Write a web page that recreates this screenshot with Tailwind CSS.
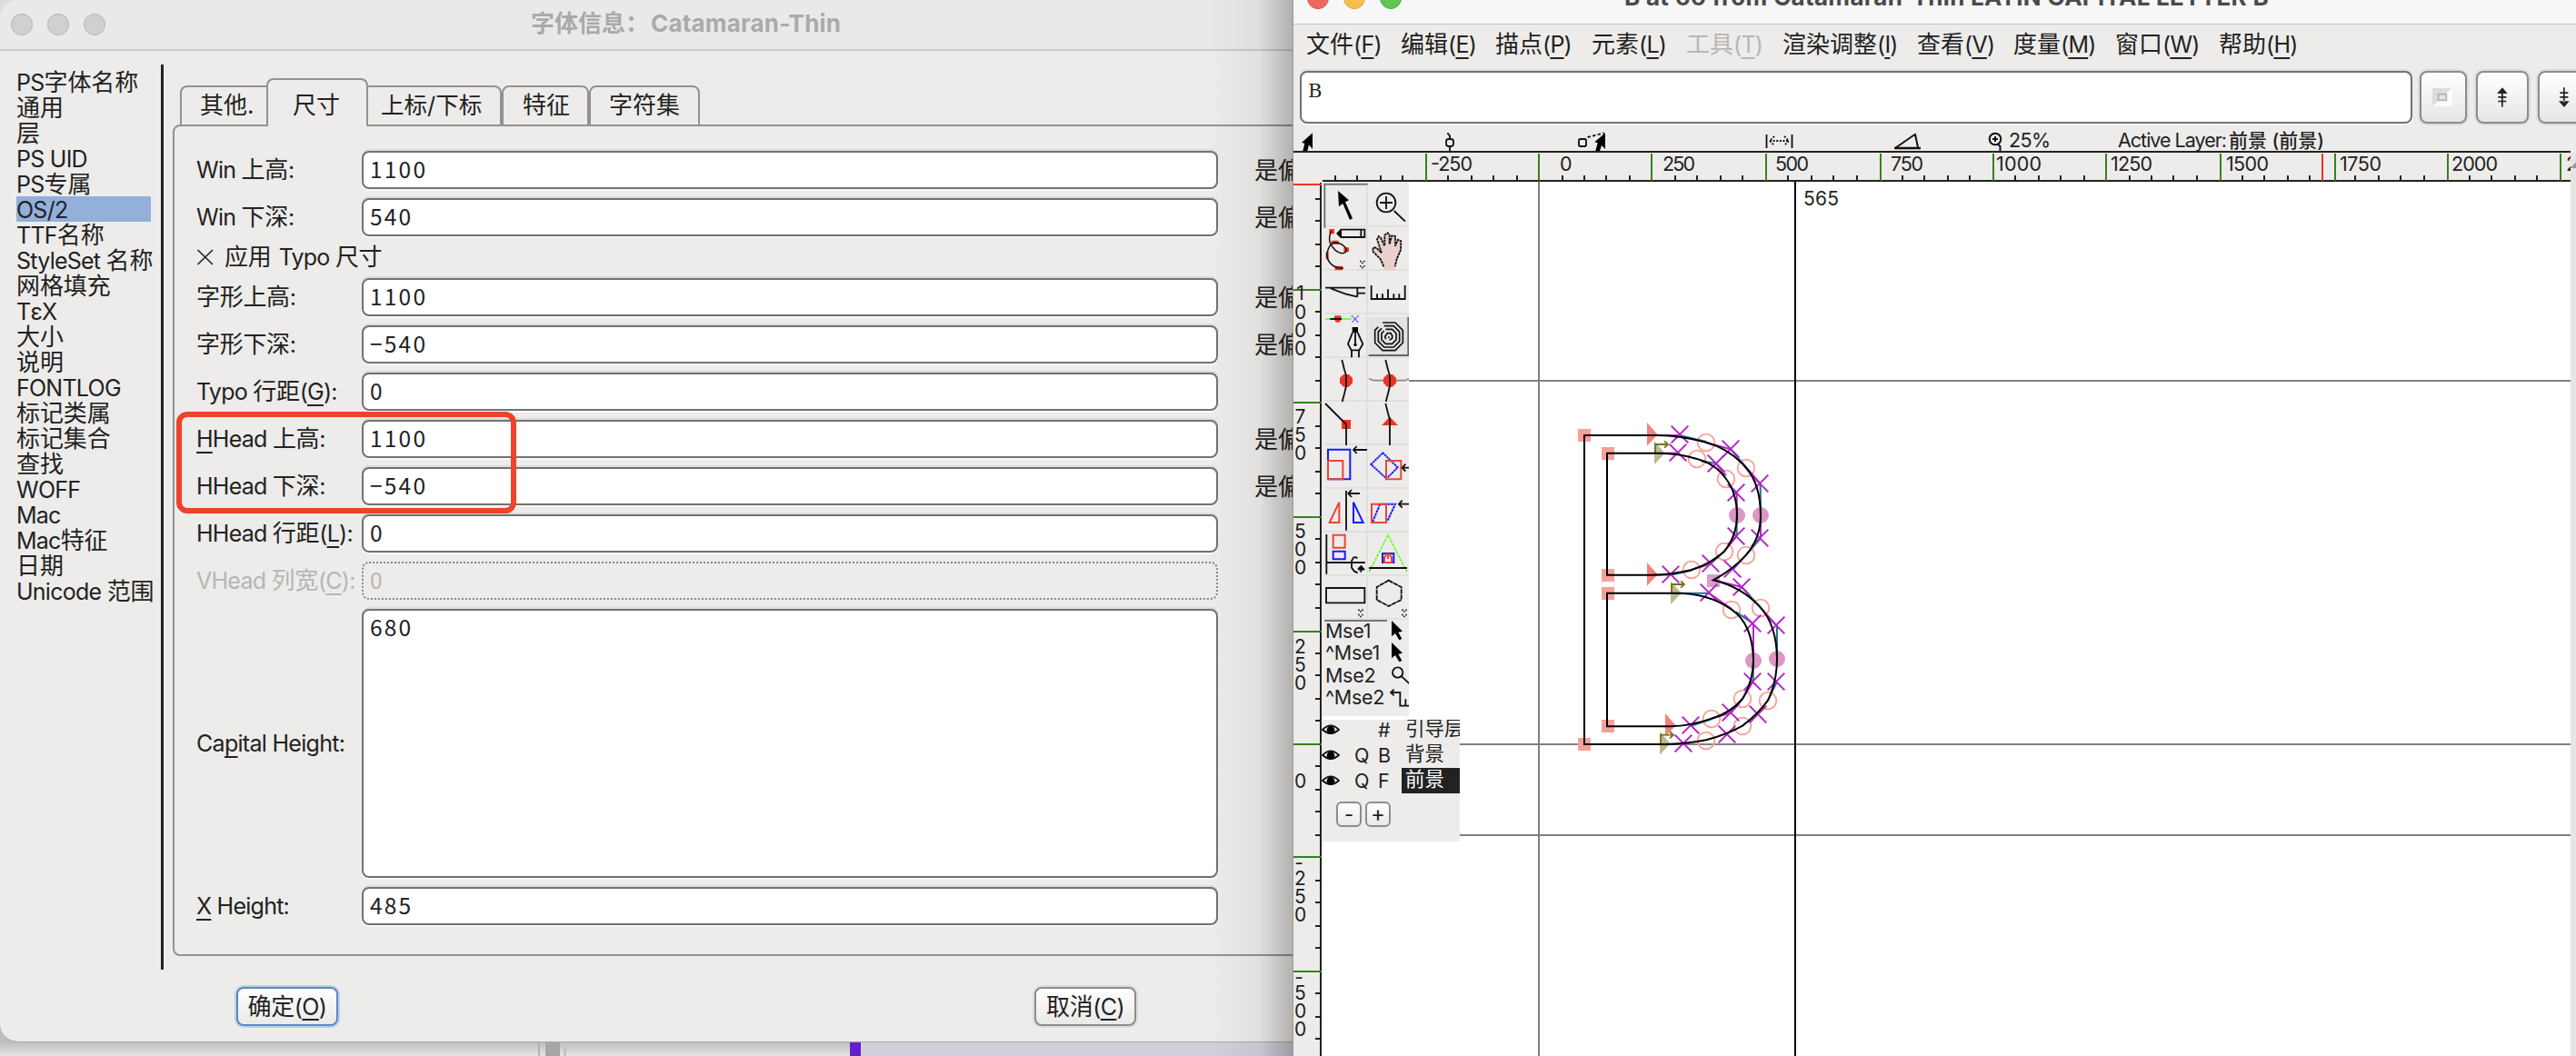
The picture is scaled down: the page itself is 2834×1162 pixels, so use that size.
<!DOCTYPE html>
<html lang="zh">
<head>
<meta charset="utf-8">
<title>FontForge</title>
<script src="https://cdn.jsdelivr.net/npm/@tailwindcss/browser@4"></script>
</head>
<body class="relative w-[2834px] h-[1162px] overflow-hidden bg-[#dcdcdb] text-[#222] font-['Inter','Noto_Sans_CJK_SC',sans-serif]">

<!-- strip of the desktop that shows below the dialog -->
<div class="absolute left-0 bottom-0 w-[1422px] h-[40px] flex bg-linear-to-b from-[#bdbdbc] from-60% to-[#e4e4e3]">
  <div class="w-[592px]"></div>
  <div class="w-[2px] bg-[#b4b4b4]"></div>
  <div class="w-[6px]"></div>
  <div class="w-[16px] bg-[#a6a6a6]"></div>
  <div class="w-[4px]"></div>
  <div class="w-[3px] bg-[#c4c4c4]"></div>
  <div class="w-[312px]"></div>
  <div class="w-[12px] bg-[#641fcf]"></div>
  <div class="grow bg-[#d2cfdc]"></div>
</div>

<!-- font information dialog -->
<section class="absolute left-0 top-0 w-[1440px] h-[1147px] flex flex-col bg-[#edecea] rounded-l-[20px] border-b border-[#aaa] overflow-hidden">
  <header class="h-[56px] shrink-0 flex items-center relative bg-[#e9e9e9] border-b-2 border-[#c9c9c9] pl-3 gap-4">
    <i class="size-6 rounded-full bg-[#d0d0d0] border border-[#b4b4b4]"></i>
    <i class="size-6 rounded-full bg-[#d0d0d0] border border-[#b4b4b4]"></i>
    <i class="size-6 rounded-full bg-[#d0d0d0] border border-[#b4b4b4]"></i>
    <h1 class="ml-[452px] mb-[3px] text-[26px] font-bold text-[#aaa] whitespace-pre flex"><span class="w-[132px] whitespace-nowrap">字体信息：</span><span class="font-[Inter] text-[26px] tracking-[0.2px]">Catamaran-Thin</span></h1>
  </header>
  <div class="flex h-[1011px] pt-[15px]">
    <nav id="side" class="w-[180px] shrink-0 h-[996px] border-r-3 border-[#222] pl-[18px] pt-[5px]"></nav>
    <div class="pl-[10px] pt-[15px]">
      <div class="flex items-end pl-[8px] h-[53px] relative z-10 -mb-[2px]">
        <div class="w-[95px] h-[45px] border-2 border-r-0 border-[#929290] rounded-tl-lg pl-[20px] leading-[39px] text-[26px] whitespace-nowrap">其他.</div>
        <div class="w-[112px] h-[53px] border-2 border-b-0 border-[#929290] rounded-t-lg pl-[27px] leading-[55px] text-[26px] bg-[#edecea] whitespace-nowrap">尺寸</div>
        <div class="w-[147px] h-[45px] border-2 border-l-0 border-[#929290] rounded-tr-lg pl-[14px] leading-[39px] text-[25.5px] whitespace-nowrap">上标/下标</div>
        <div class="w-[96px] h-[45px] border-2 border-[#929290] rounded-t-lg pl-[21px] leading-[39px] text-[26px] whitespace-nowrap">特征</div>
        <div class="w-[122px] h-[45px] border-2 border-[#929290] rounded-t-lg pl-[20px] leading-[39px] text-[26px] whitespace-nowrap">字符集</div>
      </div>
      <div id="form" class="w-[1270px] h-[915px] border-2 border-[#929290] rounded-lg pl-[24px] pt-[27px] flex flex-col gap-[10px]"></div>
    </div>
  </div>
  <footer class="flex pt-[19px] pl-[260px]">
    <button class="w-[112px] h-[43px] rounded-lg border-[2.5px] border-[#5b87c4] shadow-[0_0_0_2px_#bccfe8] bg-linear-to-b from-white to-[#e9e9e8] text-[26px] leading-[38px] whitespace-nowrap"><span class="tracking-[-0.4px]">确定</span><span class="text-[25px] tracking-[-0.6px]">(<u class="decoration-2 underline-offset-[4px]">O</u>)</span></button>
    <button class="ml-[766px] w-[112px] h-[43px] rounded-lg border-[2.5px] border-[#8c8c8a] shadow-[0_0_0_2px_#dddcda] bg-linear-to-b from-white to-[#e9e9e8] text-[26px] leading-[38px] whitespace-nowrap"><span class="tracking-[-0.4px]">取消</span><span class="text-[25px] tracking-[-0.6px]">(<u class="decoration-2 underline-offset-[4px]">C</u>)</span></button>
  </footer>
</section>

<!-- annotation frame -->
<div class="absolute left-[194px] top-[453px] w-[374px] h-[112px] border-[6px] border-[#ee4229] rounded-xl"></div>
<!-- shadow that the front window casts -->
<div class="absolute left-[1330px] top-0 w-[92px] h-[1162px] bg-linear-to-r from-transparent via-black/5 via-60% to-black/25"></div>

<!-- glyph editing window -->
<section class="absolute left-[1422px] top-0 w-[1412px] h-[1162px] bg-[#edecea] border-l border-[#9a9a98] flex flex-col overflow-hidden">
  <header class="h-[27px] shrink-0 relative bg-[#f7f7f7] border-b border-[#c6c6c6]">
    <div class="flex gap-4 pl-[15px] -mt-[14px]">
      <i class="size-6 rounded-full bg-[#ee6a5f] border border-[#d5554b]"></i>
      <i class="size-6 rounded-full bg-[#f5bf4f] border border-[#d9a33c]"></i>
      <i class="size-6 rounded-full bg-[#62c554] border border-[#4fa843]"></i>
      <h2 class="ml-[229px] mt-[-1px] leading-[24px] text-[26px] font-bold text-[#4a4a4a] whitespace-nowrap tracking-[0.3px]">B at 66 from Catamaran-Thin LATIN CAPITAL LETTER B</h2>
    </div>
  </header>
  <div id="menu" class="flex h-[51px] shrink-0 pl-[14px] leading-[44px] text-[26px] whitespace-nowrap"></div>
  <div class="flex h-[58px] shrink-0 pl-[7px]">
    <div class="w-[1224px] shrink-0 bg-white border-2 border-[#727270] rounded-lg shadow-[0_2px_0_#fafafa,0_-2px_0_#dddcda] pl-[7px] pt-[6px] font-['DejaVu_Serif'] text-[21px] leading-[28px]">B</div>
    <button class="ml-[8px] w-[52px] shrink-0 border-2 border-[#8c8c8a] rounded-lg shadow-[0_0_0_2px_#dddcda] bg-linear-to-b from-white to-[#e6e6e5]">
      <svg class="ml-[12px]" width="22" height="20" viewBox="126 78 66 60"><path d="M126 78H188L126 138Z" fill="#dcdcda"/><path d="M192 78V138H126Z" fill="#fbfbfa"/><rect x="146" y="98" width="26" height="20" fill="#e4e4e2" stroke="#b0b0ae" stroke-width="5"/></svg>
    </button>
    <button class="ml-[10px] w-[58px] shrink-0 border-2 border-[#8c8c8a] rounded-lg shadow-[0_0_0_2px_#dddcda] bg-linear-to-b from-white to-[#e6e6e5]">
      <svg class="ml-[21px] -mt-px" width="12" height="22" viewBox="338 73 36 66"><path d="M338 94L356 74L373 94ZM353 90H358V138H353ZM342 103H369V108H342ZM342 117H369V122H342Z" fill="#222"/></svg>
    </button>
    <button class="ml-[10px] w-[58px] shrink-0 border-2 border-[#8c8c8a] rounded-lg shadow-[0_0_0_2px_#dddcda] bg-linear-to-b from-white to-[#e6e6e5]">
      <svg class="ml-[21px] -mt-px" width="12" height="22" viewBox="542 73 36 66"><path d="M542 119L560 139L577 119ZM557 74H562V122H557ZM546 89H573V94H546ZM546 103H573V108H546Z" fill="#222"/></svg>
    </button>
  </div>
  <!-- status line -->
  <div class="flex h-[30px] shrink-0 items-stretch whitespace-nowrap text-[21.5px] leading-[37px] tracking-[-0.6px]">
    <svg class="ml-[8px] shrink-0" width="14" height="30" viewBox="33 228 42 90"><path d="M72 259L36 291L46 293L40 318H55L60 298L72 312Z" fill="#000"/></svg>
    <svg class="ml-[144px] shrink-0" width="12" height="30" viewBox="507 228 36 90"><g fill="none" stroke="#111" stroke-width="5.500"><path d="M517 259L525 268V278M525 304V318"/><rect x="513" y="279" width="24" height="24" rx="8"/></g></svg>
    <svg class="ml-[134px] shrink-0" width="32" height="30" viewBox="945 228 96 90"><rect x="951" y="279" width="24" height="24" rx="5" fill="none" stroke="#111" stroke-width="5.500"/><path d="M980 273L1034 259" stroke="#111" stroke-width="5.500" stroke-dasharray="10 7"/><path d="M1038 259L1003 289L1013 292L1006 318H1020L1026 300L1038 312Z" fill="#000"/></svg>
    <svg class="ml-[175px] shrink-0" width="31" height="30" viewBox="0 0 31 30"><path d="M1.500 12V27M29.500 12V27" stroke="#111" stroke-width="1.800"/><path d="M10 14L5 19L10 24M21 14L26 19L21 24M5 19H26" fill="none" stroke="#111" stroke-width="1.800" stroke-dasharray="2 1.600"/></svg>
    <svg class="ml-[111px] shrink-0" width="30" height="30" viewBox="0 0 30 30"><path d="M1 27L21 13L23 12L26 26" fill="none" stroke="#111" stroke-width="2"/><path d="M0 27H29" stroke="#111" stroke-width="2.500"/></svg>
    <svg class="ml-[73px] shrink-0" width="17" height="30" viewBox="0 0 17 30"><circle cx="8" cy="17" r="6.300" fill="none" stroke="#111" stroke-width="2"/><path d="M5 17H11M8 14V20M11 23L13.500 25V30" stroke="#111" stroke-width="2" fill="none"/></svg>
    <span class="ml-[6px] w-[120px] shrink-0">25%</span>
    <span class="shrink-0 tracking-[-1px]">Active Layer:</span><span class="ml-[3px] tracking-[0px] text-[21px] font-medium">前景 (前景)</span>
  </div>
  <!-- rulers, canvas, scrollbar -->
  <div class="flex grow min-h-0">
    <div class="w-[1405px] shrink-0 flex flex-col">
      <svg id="hruler" class="shrink-0" width="1405" height="34" viewBox="1423 166 1405 34"></svg>
      <div class="flex">
        <svg id="vruler" class="shrink-0" width="32" height="962" viewBox="1423 200 32 962"></svg>
        <div class="relative bg-white">
          <svg width="1373" height="962" viewBox="1455 200 1373 962">
            <g stroke="#808080" stroke-width="2"><path d="M1455 419H2828M1455 819H2828M1455 919H2828M1693 200V1162"/></g>
            <path d="M1975 200V1162" stroke="#000" stroke-width="2"/>
            <text x="1984" y="226" font-size="21" font-family="Inter" fill="#222" textLength="39">565</text>
            <g id="glyph" transform="translate(1680 440) scale(.333333)"></g>
          </svg>
          <!-- tool palette -->
          <div class="absolute left-0 top-0 w-[95px] h-[588px] bg-[#edecea] overflow-hidden pl-[2px] pt-[2px]">
            <div id="tools" class="grid grid-cols-[48px_48px] w-[96px]"></div>
            <div class="w-[69px] h-[2px] bg-[#777]"></div>
            <div class="pl-[1px] -mt-[2px] text-[21.5px] leading-[24.300px] tracking-[-0.3px]">
              <div class="flex justify-between w-[93px]">Mse1<svg width="20" height="24" viewBox="330 485 60 72"><path d="M330 488L366 523L352 526L364 548L355 552L342 530L330 540Z"/></svg></div>
              <div class="flex justify-between w-[93px]">^Mse1<svg width="20" height="24" viewBox="330 557 60 72"><path d="M330 560L366 595L352 598L364 620L355 624L342 602L330 612Z"/></svg></div>
              <div class="flex justify-between w-[93px]">Mse2<svg width="20" height="24" viewBox="330 629 60 72"><g fill="none" stroke="#111" stroke-width="5.500"><circle cx="350" cy="656" r="17"/><path d="M363 669L390 694"/></g></svg></div>
              <div class="flex justify-between w-[93px]">^Mse2<svg width="22" height="24" viewBox="324 701 66 72"><path d="M338 712L327 722L338 732M327 722H358V766H390M376 744V766" fill="none" stroke="#111" stroke-width="5.500"/></svg></div>
            </div>
          </div>
          <!-- layer palette -->
          <div id="layers" class="absolute -left-px top-[592px] w-[152px] h-[134px] bg-[#edecea] overflow-hidden"></div>
        </div>
      </div>
    </div>
    <div class="w-[6px] mt-[2px] bg-[#e5e5e2]"><svg width="6" height="26" viewBox="0 0 6 26"><path d="M6 12V16H2Z" fill="#999" stroke="#999" stroke-width="2"/></svg></div>
  </div>
</section>

<script>
const $ = id => document.getElementById(id);
// Latin runs are set a little smaller and tighter than the CJK text round them
const mix = s => s.replace(/[A-Za-z0-9ε\/_()%:. ]+/g, m =>
  `<span class="text-[25px] ${m.length > 13 ? 'tracking-[-0.700px]' : 'tracking-[-0.750px]'}">${m.replace(/_(.)/g, '<u class="decoration-2 underline-offset-[5px]">$1</u>')}</span>`);

$('side').innerHTML = ['PS字体名称','通用','层','PS UID','PS专属','OS/2','TTF名称','StyleSet 名称','网格填充','TεX','大小','说明','FONTLOG','标记类属','标记集合','查找','WOFF','Mac','Mac特征','日期','Unicode 范围']
  .map(t => `<div class="h-[28px] w-[148px] leading-[30px] text-[26px] tracking-[-0.1px] whitespace-nowrap ${t === 'OS/2' ? 'bg-[#93b0da]' : ''}">${mix(t)}</div>`).join('');

const off = '是偏';
const fields = [['Win 上高:','1100',off],['Win 下深:','540',off],null,['字形上高:','1100',off],['字形下深:','−540',off],['Typo 行距(_G):','0',''],
  ['_HHead 上高:','1100',off],['HHead 下深:','−540',off],['HHead 行距(_L):','0',''],['VHead 列宽(_C):','0','','dis'],['Ca_pital Height:','680','','big'],['_X Height:','485','']];
$('form').innerHTML = fields.map(f => {
  if (!f) return `<div class="h-[26px] flex items-center text-[26px] whitespace-pre leading-[26px]"><svg width="20" height="20" viewBox="0 0 20 20"><path d="M1.500 2L18 18M18 2L1.500 18" stroke="#222" stroke-width="1.600"/></svg><span class="ml-[11px] tracking-[-0.3px]">应用<span class="ml-[2px]">${mix(' Typo ')}</span>尺寸</span></div>`;
  const [l, v, r, k] = f;
  return `<div class="flex items-center shrink-0 ${k === 'big' ? 'h-[296px]' : 'h-[42px]'}">
    <div class="w-[182px] shrink-0 text-[26px] tracking-[-0.3px] whitespace-nowrap ${k === 'dis' ? 'text-[#b6b6b4]' : ''}">${mix(l)}</div>
    <div class="w-[942px] h-full shrink-0 rounded-lg border-2 pl-[7px] leading-[36px] text-[24.500px] tracking-[2.200px] font-['Noto_Sans_CJK_SC'] ${k === 'dis' ? 'border-dotted border-[#888] text-[#b6b6b4]' : 'bg-white border-[#727270] shadow-[0_2px_0_#f8f8f7,0_-2px_0_#dddcda]'}">${v}</div>
    <div class="ml-[40px] text-[26px] tracking-[-0.3px] whitespace-nowrap">${r}</div></div>`;
}).join('');

$('menu').innerHTML = [['文件(_F)','w-[104px]'],['编辑(_E)','w-[104px]'],['描点(_P)','w-[106px]'],['元素(_L)','w-[104px]'],['工具(_T)','w-[106px] text-[#b6b6b4]'],['渲染调整(_I)','w-[148px]'],['查看(_V)','w-[106px]'],['度量(_M)','w-[112px]'],['窗口(_W)','w-[114px]'],['帮助(_H)','w-[100px]']]
  .map(([t, c]) => `<div class="${c} shrink-0">${mix(t)}</div>`).join('');

// rulers
let h = '<path d="M1423 167H2834" stroke="#222" stroke-width="2"/><path d="M1455 199H2828" stroke="#222" stroke-width="2"/>';
for (let i = -4; i < 51; i++) { const x = 2 * Math.floor((1569.3 + 24.96 * i - 1) / 2) + 1; if (((i % 5) + 5) % 5) h += `<path d="M${x} 193V199" stroke="#222" stroke-width="2"/>`; }
[1569,1693,1817,1943,2069,2193,2317,2443,2569,2693,2817].forEach(x => h += `<path d="M${x} 169V199" stroke="#37801f" stroke-width="2"/>`);
h += '<path d="M2555 169V199" stroke="#ee3322" stroke-width="2"/>';
[[1574,'-250',46],[1716,'0',13],[1829,'250',36],[1953,'500',37],[2080,'750',36],[2196,'1000',50],[2322,'1250',46],[2449,'1500',47],[2574,'1750',46],[2697,'2000',51],[2823,'2250',50]].forEach(([x, t, w]) => h += `<text x="${x}" y="188" font-size="21.500" font-family="Inter" fill="#222" textLength="${w}">${t}</text>`);
$('hruler').innerHTML = h;
let v = '<path d="M1453 201V1162" stroke="#222" stroke-width="2"/><path d="M1423 203H1454" stroke="#ee3322" stroke-width="2"/>';
for (let i = -4; i < 34; i++) { const y = 2 * Math.floor((319.3 + 25 * i - 1) / 2) + 1; if (((i % 5) + 5) % 5) v += `<path d="M1447 ${y}H1453" stroke="#222" stroke-width="2"/>`; }
[319,443,569,695,819,943,1069].forEach(y => v += `<path d="M1423 ${y}H1454" stroke="#37801f" stroke-width="2"/>`);
[[322,'1'],[343,'0'],[363,'0'],[383,'0'],[458,'7'],[478,'5'],[498,'0'],[584,'5'],[604,'0'],[624,'0'],[711,'2'],[731,'5'],[751,'0'],[859,'0'],[949,'-'],[966,'2'],[986,'5'],[1006,'0'],[1075,'-'],[1092,'5'],[1112,'0'],[1132,'0']]
  .forEach(([y, t]) => v += `<text x="${t === '-' ? 1429 : 1430.5}" y="${y + 8}" text-anchor="middle" font-size="21" font-family="Inter" fill="#222">${t}</text>`);
$('vruler').innerHTML = v;

// outline of the glyph with its control points
let g = '';
const ln = (c, s) => s.forEach(([a, b, x, y]) => g += `<path d="M${a} ${b}L${x} ${y}" stroke="${c}" stroke-width="6"/>`);
[[189,117],[267,177],[267,579],[267,639],[267,1077],[189,1137]].forEach(([x, y]) => g += `<rect x="${x-21}" y="${y-21}" width="42" height="42" fill="#f7a099"/>`);
g += '<rect x="594" y="576" width="42" height="42" fill="#dc9cc8"/>';
[[396,75],[396,537],[456,1035]].forEach(([x, y]) => g += `<path d="M${x} ${y}L${x+35} ${y+40}L${x} ${y+77}Z" fill="#f4837b"/>`);
[[420,136],[474,598],[438,1095]].forEach(([x, y]) => g += `<path d="M${x} ${y}L${x+35} ${y+40}L${x} ${y+77}Z" fill="#bbb98c"/><path d="M${x+3} ${y+40}V${y+11}H${x+44}M${x+33} ${y}L${x+45} ${y+11}L${x+33} ${y+22}" fill="none" stroke="#73711c" stroke-width="5.500"/>`);
[[693,381],[771,381],[747,861],[825,855]].forEach(([x, y]) => g += `<circle cx="${x}" cy="${y}" r="27" fill="#dc97c4"/>`);
[[591,141],[723,225],[561,195],[657,261],[651,501],[723,513],[543,561],[675,693],[771,687],[711,987],[795,993],[609,1053],[711,1077],[591,1125]].forEach(([x, y]) => g += `<circle cx="${x}" cy="${y}" r="28" fill="none" stroke="#f7a096" stroke-width="5.500"/>`);
ln('#2b6f90', [[503,117,591,138],[672,163,723,222],[770,277,771,381],[771,457,723,512],[575,203,623,209],[692,381,692,450],[606,541,651,500],[475,578,543,563],[490,638,600,638],[709,618,771,686],[690,700,745,738],[825,745,825,855],[747,860,746,930],[825,930,795,992],[673,1033,711,987],[540,1077,609,1054],[670,285,692,306]]);
ln('#b324c6', [[430,117,503,117],[591,141,672,163],[723,222,770,277],[771,381,771,457],[437,176,498,176],[623,211,657,250],[692,306,693,381],[651,500,692,450],[543,561,606,541],[413,578,475,578],[615,595,709,618],[771,687,824,745],[600,638,675,690],[747,738,747,860],[711,987,746,930],[723,512,680,560],[609,1052,673,1033]]);
[[504,114],[672,162],[498,174],[624,210],[768,276],[690,306],[690,450],[768,456],[606,540],[474,576],[678,558],[708,618],[600,636],[744,738],[822,744],[744,930],[822,930],[672,1032],[762,1038],[540,1074],[660,1104],[516,1134]].forEach(([x, y]) => g += `<path d="M${x-28} ${y-28}L${x+28} ${y+28}M${x+28} ${y-28}L${x-28} ${y+28}" stroke="#b022c8" stroke-width="6"/>`);
g += `<path fill="none" stroke="#000" stroke-width="6" d="M189 117H430Q503 117 591 140Q672 163 723 225Q770 277 771 381Q771 457 723 512Q680 560 615 595Q709 618 771 686Q824 745 825 855Q825 930 795 992Q763 1037 711 1076Q660 1105 591 1123Q517 1137 457 1137H189ZM264 176H437Q498 176 561 195Q623 211 657 261Q692 306 693 381Q692 450 651 500Q606 541 543 561Q475 578 413 578H264ZM264 638H490Q600 638 675 692Q745 740 747 860Q746 930 711 987Q673 1033 609 1052Q540 1077 472 1078H264Z"/>`;
$('glyph').innerHTML = g;

// tool icons
const K = 'fill="none" stroke="#111" stroke-width="5.500"', R = 'fill="none" stroke="#ee4433" stroke-width="6"', B = 'fill="none" stroke="#1a1aff" stroke-width="6"';
const chev = (x, y) => `<path d="M${x-8} ${y}L${x} ${y+7}L${x+8} ${y}M${x-8} ${y+16}L${x} ${y+23}L${x+8} ${y+16}" fill="none" stroke="#222" stroke-width="5" stroke-dasharray="5 3"/>`;
const arrow = (x, y, e) => `<path d="M${x+12} ${y-12}L${x+1} ${y}L${x+12} ${y+12}M${x} ${y}H${e}" ${K}/>`;
const ring = (r, s) => { const k = r * .45; return `M${324-k} ${571-r}H${324+k}L${324+r} ${571-k}V${571+k}L${324+k} ${571+r}H${324-k}L${324-r} ${571+k}V${571-k}L${324-r+s} ${571-k-s}`; };
const icons = [
  [111,66,`<path d="M112 212V68H254" fill="none" stroke="#777" stroke-width="6"/><path d="M156 90L192 121L180 127L204 181L195 186L172 132L159 142Z"/>`],
  [255,66,`<circle cx="315" cy="129" r="31" ${K}/><path d="M315 108V150M294 129H336M341 156L378 191" ${K}/>`],
  [111,210,`<path d="M166 218H244V243H166L154 231ZM232 218V243" ${K}/><path d="M152 231L168 218V243Z"/><g fill="#ee3322"><path d="M127 216H144V232H127ZM134 254H158V267H134ZM175 277H192V292H175ZM116 292H125V316H116ZM146 338H171V352H146Z"/></g><path d="M134 222Q124 245 130 262Q145 292 168 296Q186 296 183 282Q172 262 146 260Q126 262 119 300Q122 335 158 345H174" fill="none" stroke="#111" stroke-width="4.500"/>${chev(237,321)}`],
  [255,210,`<path d="M307 340L296 315L271 290L272 277L282 278L298 293L285 250L290 240L297 245L308 267L310 234L320 229L326 236V262L336 236L345 240V265L354 251L364 256L363 290L350 320L344 340V354H312Z" fill="#ecd0d0"/><path d="M307 340L296 315L271 290L272 277L282 278L300 295L285 250L290 240L297 245L310 272V236L320 229L326 236V266L334 238L345 240V272L354 251L364 256L363 285L350 315L344 340" ${K} stroke-dasharray="9 2"/>`],
  [111,354,`<path d="M114 410H246M132 412L180 430L220 440M220 410V440M220 428H246" ${K}/>`],
  [255,354,`<path d="M266 402V447H377V402M285 447V430M303 447V430M321 447V415M340 447V430M358 447V430" ${K}/>`],
  [111,498,`<path d="M114 513H200" stroke="#7cfa4c" stroke-width="6"/><path d="M145 502H165L169 513L160 524H150L142 513Z" fill="#ee3322"/><path d="M130 513H168" ${K}/><path d="M201 502L224 525M224 502L201 525" stroke="#6666ff" stroke-width="5" stroke-dasharray="6 2"/><path d="M203 540H222V558H203Z"/><path d="M204 558L189 595L200 616H226L238 595L221 558M213 556V598M201 640V616M225 640V616" ${K}/><circle cx="213" cy="598" r="5"/>`],
  [255,498,`<path d="M257 506H388V636H257Z" fill="#e3e3e1"/><path d="M257 633H388V506" fill="none" stroke="#666" stroke-width="6"/><path d="${ring(46,11)}${ring(35,11)}${ring(24,8)}M314 580L311 571L319 560H330L335 568V576L326 583M324 571V576" fill="none" stroke="#111" stroke-width="5"/>`],
  [111,642,`<path d="M174 696H192L204 708V724L192 737H174L162 724V708Z" fill="#ee3322"/><path d="M169 648L177 680L183 700V735L177 760L170 786" ${K}/>`],
  [255,642,`<path d="M258 710L275 716H378L390 710" fill="none" stroke="#888" stroke-width="5"/><path d="M318 696H336L348 708V724L336 737H318L306 724V708Z" fill="#ee3322"/><path d="M313 648L321 680L327 700V735L321 760L314 786" ${K}/>`],
  [111,786,`<path d="M168 846H198V876H168Z" fill="#ee3322"/><path d="M114 792L183 861V930" ${K}/>`],
  [255,786,`<path d="M300 864L327 836L354 864Z" fill="#ee3322"/><path d="M313 792L321 824L327 845V930" ${K}/>`],
  [111,930,`<path d="M123 944H196V1042H123Z" ${B}/><path d="M123 981H172V1042H123Z" ${R}/>${arrow(206,945,252)}`],
  [255,930,`<path d="M265 993L304 955L353 1003L316 1040Z" ${B} stroke-dasharray="7 2"/><path d="M315 981H364V1042H315Z" ${R}/>${arrow(367,1004,392)}`],
  [111,54,`<path d="M128 165L160 98V165Z" ${R}/><path d="M207 98V165H239Z" ${B}/><path d="M183 60V191" ${K}/>${arrow(189,69,228)}`],
  [255,54,`<path d="M270 163L295 104H345L319 160" ${B} stroke-dasharray="9 2"/><path d="M267 104H315V165H267Z" ${R}/>${arrow(356,104,392)}`],
  [111,198,`<path d="M118 204V335M118 297H246" ${K}/><path d="M140 206H179V248H140Z" ${R}/><path d="M140 260H179V286H140Z" ${B}/><path d="M220 283Q215 278 208 280L201 292V314L210 326L221 331M221 320H244M222 319L232 309L242 319M232 309V329" ${K}/>`],
  [255,198,`<path d="M259 328L321 206L383 328" fill="none" stroke="#7cfa4c" stroke-width="6" stroke-dasharray="11 3"/><path d="M258 315H384" ${K}/><path d="M303 267H340V297H303Z" ${B}/><path d="M309 297V280L315 270H327L333 280V297ZM321 272V285" ${R}/>`],
  [111,342,`<path d="M117 381H244V430H117Z" ${K}/>${chev(231,452)}`],
  [255,342,`<path d="M323 356L365 378V420L323 441L284 420V378Z" ${K} stroke-dasharray="16 2"/>${chev(375,452)}`]];
$('tools').innerHTML = icons.map(([x, y, s]) => `<div class="size-[48px] border-r-2 border-b-2 border-[#e0e0de]"><svg class="overflow-visible" width="48" height="48" viewBox="${x} ${y} 144 144">${s}</svg></div>`).join('');

// layer list
const eye = '<svg class="shrink-0" width="20" height="12" viewBox="0 0 20 12"><path d="M1 6Q10 -3 19 6Q10 14 1 6Z" fill="none" stroke="#111" stroke-width="1.800"/><circle cx="10" cy="6.500" r="4.400"/></svg>';
$('layers').innerHTML = [['','#','引导层','h-[28px] -mt-[3px]',''],['Q','B','背景','h-[28px]',''],['Q','F','前景','h-[28px]','bg-[#222] text-white']].map(([q, b, n, c, s], i) =>
  `<div class="flex items-center text-[21.500px] whitespace-nowrap w-[170px] ${c}">${eye}<span class="w-[26px] shrink-0 ml-[16px]">${q}</span><span class="w-[26px] shrink-0">${b}</span><span class="pl-[4px] w-[80px] h-[28px] leading-[25px] ${s}">${n}</span></div>`).join('') +
  `<div class="flex gap-[4px] pl-[16px] pt-[9px]"><button class="size-[28px] rounded-md border-2 border-[#8c8c8a] bg-linear-to-b from-white to-[#e9e9e8] text-[22px] leading-[24px]">-</button><button class="size-[28px] rounded-md border-2 border-[#8c8c8a] bg-linear-to-b from-white to-[#e9e9e8] text-[24px] leading-[24px]">+</button></div>`;
</script>
</body>
</html>
